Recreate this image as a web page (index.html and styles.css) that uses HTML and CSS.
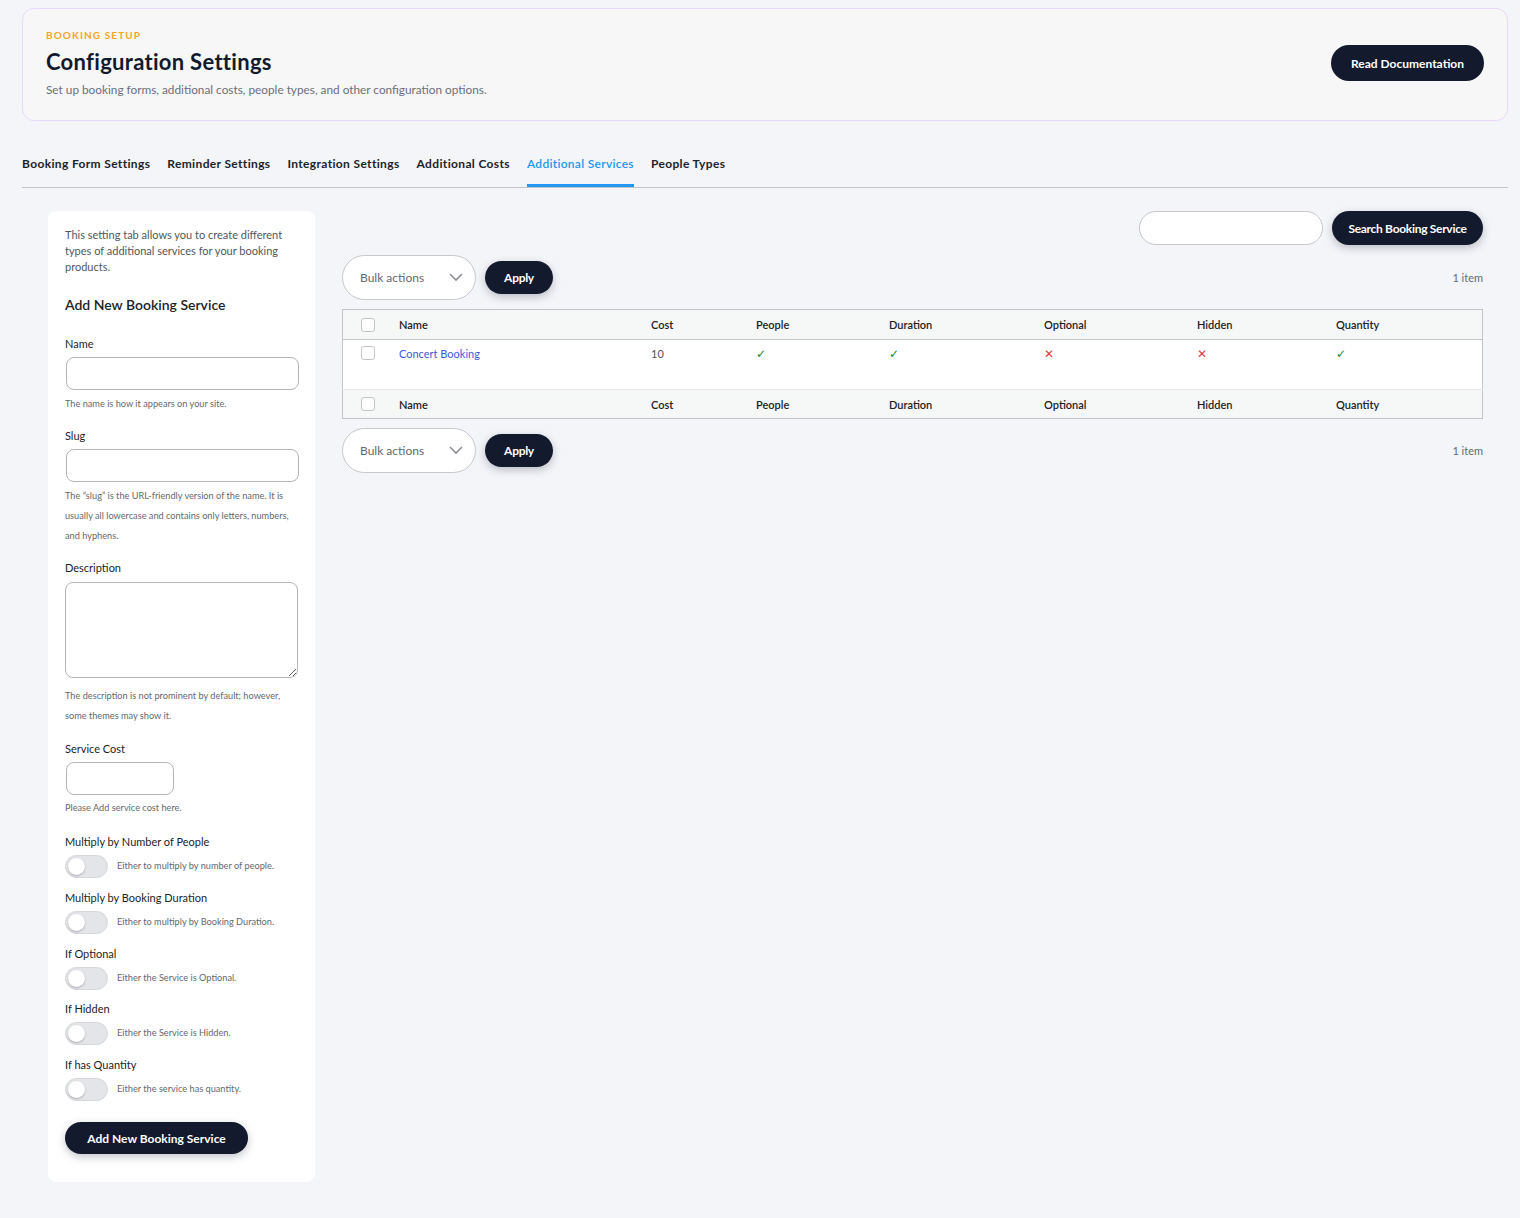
FILE: index.html
```html
<html>

<head>
  <link rel="stylesheet" href="styles.css">
</head>

<body>
  <div class="page-header">
    <div>
      <div class="eyebrow">BOOKING SETUP</div>
      <h1>Configuration Settings</h1>
      <p class="subtitle">Set up booking forms, additional costs, people types, and other configuration options.</p>
    </div>
    <a class="dark-button doc-button" href="#">Read Documentation</a>
  </div>

  <div class="nav-tabs">
    <a class="tab" href="#">Booking Form Settings</a>
    <a class="tab" href="#">Reminder Settings</a>
    <a class="tab" href="#">Integration Settings</a>
    <a class="tab" href="#">Additional Costs</a>
    <a class="tab active" href="#">Additional Services</a>
    <a class="tab" href="#">People Types</a>
  </div>

  <div class="content">
    <div class="form-panel">
      <p class="intro">This setting tab allows you to create different types of additional services for your booking products.</p>
      <h2>Add New Booking Service</h2>

      <label class="field-label first">Name</label>
      <input class="text-input" type="text">
      <p class="help">The name is how it appears on your site.</p>

      <label class="field-label">Slug</label>
      <input class="text-input" type="text">
      <p class="help">The “slug” is the URL-friendly version of the name. It is usually all lowercase and contains only letters, numbers, and hyphens.</p>

      <label class="field-label">Description</label>
      <textarea class="text-area"></textarea>
      <p class="help help-desc">The description is not prominent by default; however, some themes may show it.</p>

      <label class="field-label">Service Cost</label>
      <input class="text-input cost-input" type="text">
      <p class="help help-cost">Please Add service cost here.</p>

      <div class="toggle-group first-toggle">
        <label class="field-label">Multiply by Number of People</label>
        <div class="toggle-row"><span class="toggle"></span><span class="toggle-help">Either to multiply by number of people.</span></div>
      </div>
      <div class="toggle-group">
        <label class="field-label">Multiply by Booking Duration</label>
        <div class="toggle-row"><span class="toggle"></span><span class="toggle-help">Either to multiply by Booking Duration.</span></div>
      </div>
      <div class="toggle-group">
        <label class="field-label">If Optional</label>
        <div class="toggle-row"><span class="toggle"></span><span class="toggle-help">Either the Service is Optional.</span></div>
      </div>
      <div class="toggle-group">
        <label class="field-label">If Hidden</label>
        <div class="toggle-row"><span class="toggle"></span><span class="toggle-help">Either the Service is Hidden.</span></div>
      </div>
      <div class="toggle-group">
        <label class="field-label">If has Quantity</label>
        <div class="toggle-row"><span class="toggle"></span><span class="toggle-help">Either the service has quantity.</span></div>
      </div>

      <button class="dark-button add-button">Add New Booking Service</button>
    </div>

    <div class="list-area">
      <div class="search-row">
        <input class="search-input" type="text">
        <button class="dark-button search-button">Search Booking Service</button>
      </div>

      <div class="bulk-row">
        <div class="bulk-select">
          <span>Bulk actions</span>
          <svg width="14" height="9" viewBox="0 0 14 9"><polyline points="1,1 7,7 13,1" fill="none" stroke="#8c8f94" stroke-width="1.6"/></svg>
        </div>
        <button class="dark-button apply-button">Apply</button>
        <span class="count">1 item</span>
      </div>

      <table class="list-table">
        <thead>
          <tr>
            <th class="col-check"><span class="checkbox"></span></th>
            <th class="col-name">Name</th>
            <th class="col-cost">Cost</th>
            <th class="col-people">People</th>
            <th class="col-duration">Duration</th>
            <th class="col-optional">Optional</th>
            <th class="col-hidden">Hidden</th>
            <th class="col-quantity">Quantity</th>
          </tr>
        </thead>
        <tbody>
          <tr>
            <td><span class="checkbox"></span></td>
            <td><a class="row-title" href="#">Concert Booking</a></td>
            <td class="cost">10</td>
            <td><span class="yes">✓</span></td>
            <td><span class="yes">✓</span></td>
            <td><span class="no">✕</span></td>
            <td><span class="no">✕</span></td>
            <td><span class="yes">✓</span></td>
          </tr>
        </tbody>
        <tfoot>
          <tr>
            <th><span class="checkbox"></span></th>
            <th>Name</th>
            <th>Cost</th>
            <th>People</th>
            <th>Duration</th>
            <th>Optional</th>
            <th>Hidden</th>
            <th>Quantity</th>
          </tr>
        </tfoot>
      </table>

      <div class="bulk-row bottom">
        <div class="bulk-select">
          <span>Bulk actions</span>
          <svg width="14" height="9" viewBox="0 0 14 9"><polyline points="1,1 7,7 13,1" fill="none" stroke="#8c8f94" stroke-width="1.6"/></svg>
        </div>
        <button class="dark-button apply-button">Apply</button>
        <span class="count">1 item</span>
      </div>
    </div>
  </div>

</body>

</html>
```

FILE: styles.css
```css
body {
  margin: 0;
  padding: 8px 12px 36px 22px;
  background-color: #f4f5f9;
  font-family: "Lato", "Noto Sans", sans-serif;
  color: #1d2327;
}

.page-header {
  display: flex;
  align-items: center;
  justify-content: space-between;
  background-color: #f7f7f8;
  border: 1px solid #ead7fb;
  border-radius: 12px;
  padding: 19px 23px 22px 23px;
}

.eyebrow {
  color: #f5a524;
  font-size: 10px;
  font-weight: 700;
  letter-spacing: 1.1px;
  line-height: 14px;
}

h1 {
  margin: 6px 0 0 0;
  font-size: 22px;
  font-weight: 700;
  letter-spacing: 0.3px;
  line-height: 28px;
  color: #121a2e;
}

.subtitle {
  margin: 6px 0 0 0;
  font-size: 11.8px;
  line-height: 16px;
  color: #6b6f7b;
}

.dark-button {
  display: inline-flex;
  align-items: center;
  justify-content: center;
  background-color: #141a2e;
  color: #ffffff;
  border: none;
  font-family: "Lato", "Noto Sans", sans-serif;
  font-weight: 700;
  font-size: 12px;
  text-decoration: none;
  cursor: pointer;
}

.doc-button {
  height: 36px;
  width: 153px;
  border-radius: 18px;
}

.nav-tabs {
  display: flex;
  gap: 17px;
  margin-top: 27px;
  border-bottom: 1px solid #c3c4c7;
}

.tab {
  font-size: 12px;
  font-weight: 700;
  letter-spacing: 0.35px;
  color: #1d2327;
  text-decoration: none;
  line-height: 16px;
  padding: 8px 0 12px 0;
  border-bottom: 3px solid transparent;
}

.tab.active {
  color: #2196f3;
  font-weight: 600;
  letter-spacing: 0.3px;
  border-bottom-color: #2196f3;
}

.content {
  display: grid;
  grid-template-columns: 267px 1fr;
  gap: 27px;
  align-items: start;
  padding: 0 25px 0 26px;
  margin-top: 23px;
}

/* left form */

.form-panel {
  background-color: #ffffff;
  border-radius: 8px;
  padding: 16px 17px 28px 17px;
  display: flex;
  flex-direction: column;
  align-items: flex-start;
}

.intro {
  margin: 0;
  font-size: 11px;
  line-height: 16px;
  color: #50575e;
}

h2 {
  margin: 20px 0 0 0;
  font-size: 14px;
  font-weight: 600;
  line-height: 20px;
  color: #1d2327;
}

.field-label {
  display: block;
  font-size: 11px;
  line-height: 16px;
  color: #1d2327;
  margin-top: 14px;
}

.field-label.first {
  margin-top: 21px;
}

.text-input {
  box-sizing: border-box;
  width: 233px;
  height: 33px;
  margin: 5px 0 0 1px;
  border: 1px solid #b4b4bb;
  border-radius: 8px;
  background: #ffffff;
}

.cost-input {
  width: 108px;
}

.text-area {
  box-sizing: border-box;
  width: 233px;
  height: 96px;
  margin-top: 6px;
  border: 1px solid #b4b4bb;
  border-radius: 8px;
  background: #ffffff;
}

.help {
  margin: 4px 0 0 0;
  font-size: 9.2px;
  line-height: 20px;
  color: #646970;
}

.help-desc {
  margin-top: 8px;
}

.help-cost {
  margin-top: 3px;
}

.help + .field-label {
  margin-top: 14px;
}

.help-desc + .field-label {
  margin-top: 15px;
}

.toggle-group .field-label {
  margin-top: 0;
}

.toggle-group {
  margin-top: 11.75px;
}

.first-toggle {
  margin-top: 16px;
}

.toggle-row {
  display: flex;
  align-items: center;
  gap: 9px;
  margin-top: 5px;
}

.toggle {
  position: relative;
  box-sizing: border-box;
  width: 43px;
  height: 23px;
  border-radius: 12px;
  background-color: #e4e5e9;
  border: 1px solid #d6d7db;
}

.toggle:after {
  content: "";
  position: absolute;
  left: 2px;
  top: 2px;
  width: 17px;
  height: 17px;
  border-radius: 50%;
  background-color: #ffffff;
  box-shadow: 0 1px 2px rgba(0, 0, 0, 0.25);
}

.toggle-help {
  font-size: 9.2px;
  color: #646970;
  margin-top: -2px;
}

.add-button {
  margin-top: 21px;
  height: 32px;
  width: 183px;
  border-radius: 16px;
  box-shadow: 0 3px 8px rgba(20, 26, 46, 0.25);
}

/* right list */

.search-row {
  display: flex;
  justify-content: flex-end;
  gap: 9px;
}

.search-input {
  box-sizing: border-box;
  width: 184px;
  height: 34px;
  border: 1px solid #c8c8cc;
  border-radius: 17px;
  background: #ffffff;
}

.search-button {
  height: 34px;
  width: 151px;
  border-radius: 17px;
  letter-spacing: -0.3px;
  box-shadow: 0 3px 8px rgba(20, 26, 46, 0.25);
}

.bulk-row {
  display: flex;
  align-items: center;
  gap: 9px;
  margin-top: 10px;
}

.bulk-row.bottom {
  margin-top: 9px;
}

.bulk-select {
  box-sizing: border-box;
  width: 134px;
  height: 45px;
  border: 1px solid #c8c8cc;
  border-radius: 23px;
  background: #ffffff;
  display: flex;
  align-items: center;
  justify-content: space-between;
  padding: 0 12px 0 17px;
  font-size: 12px;
  color: #646970;
}

.apply-button {
  height: 33px;
  width: 68px;
  border-radius: 17px;
  letter-spacing: -0.3px;
  box-shadow: 0 3px 8px rgba(20, 26, 46, 0.25);
}

.count {
  margin-left: auto;
  font-size: 11px;
  color: #646970;
}

.list-table {
  width: 100%;
  margin-top: 9px;
  border-collapse: collapse;
  border: 1px solid #c3c4c7;
  background-color: #ffffff;
  font-size: 11px;
}

.list-table th {
  text-align: left;
  font-weight: 600;
  color: #1d2327;
  background-color: #f6f7f7;
  height: 29px;
  padding: 0 10px;
}

.list-table thead th {
  height: 30px;
  border-bottom: 1px solid #c3c4c7;
}

.list-table tfoot th {
  border-top: 1px solid #e6e7e9;
}

.list-table td {
  vertical-align: top;
  height: 50px;
  padding: 6px 10px 0 10px;
  box-sizing: border-box;
  line-height: 16px;
}

.col-check { width: 28px; }
.col-name { width: 232px; }
.col-cost { width: 85px; }
.col-people { width: 113px; }
.col-duration { width: 135px; }
.col-optional { width: 133px; }
.col-hidden { width: 119px; }

.list-table th:first-child,
.list-table td:first-child {
  padding: 0 0 0 18px;
}

.list-table td:first-child {
  padding-top: 6px;
}

.checkbox {
  display: block;
  box-sizing: border-box;
  width: 14px;
  height: 14px;
  border: 1px solid #c3c4c7;
  border-radius: 3px;
  background: #ffffff;
}

.row-title {
  color: #3a5bdc;
  text-decoration: none;
}

.cost {
  color: #50575e;
}

.yes {
  color: #14892c;
  font-family: "DejaVu Sans", sans-serif;
  font-size: 12px;
}

.no {
  color: #e03b3b;
  font-family: "DejaVu Sans", sans-serif;
  font-size: 12px;
}
```
